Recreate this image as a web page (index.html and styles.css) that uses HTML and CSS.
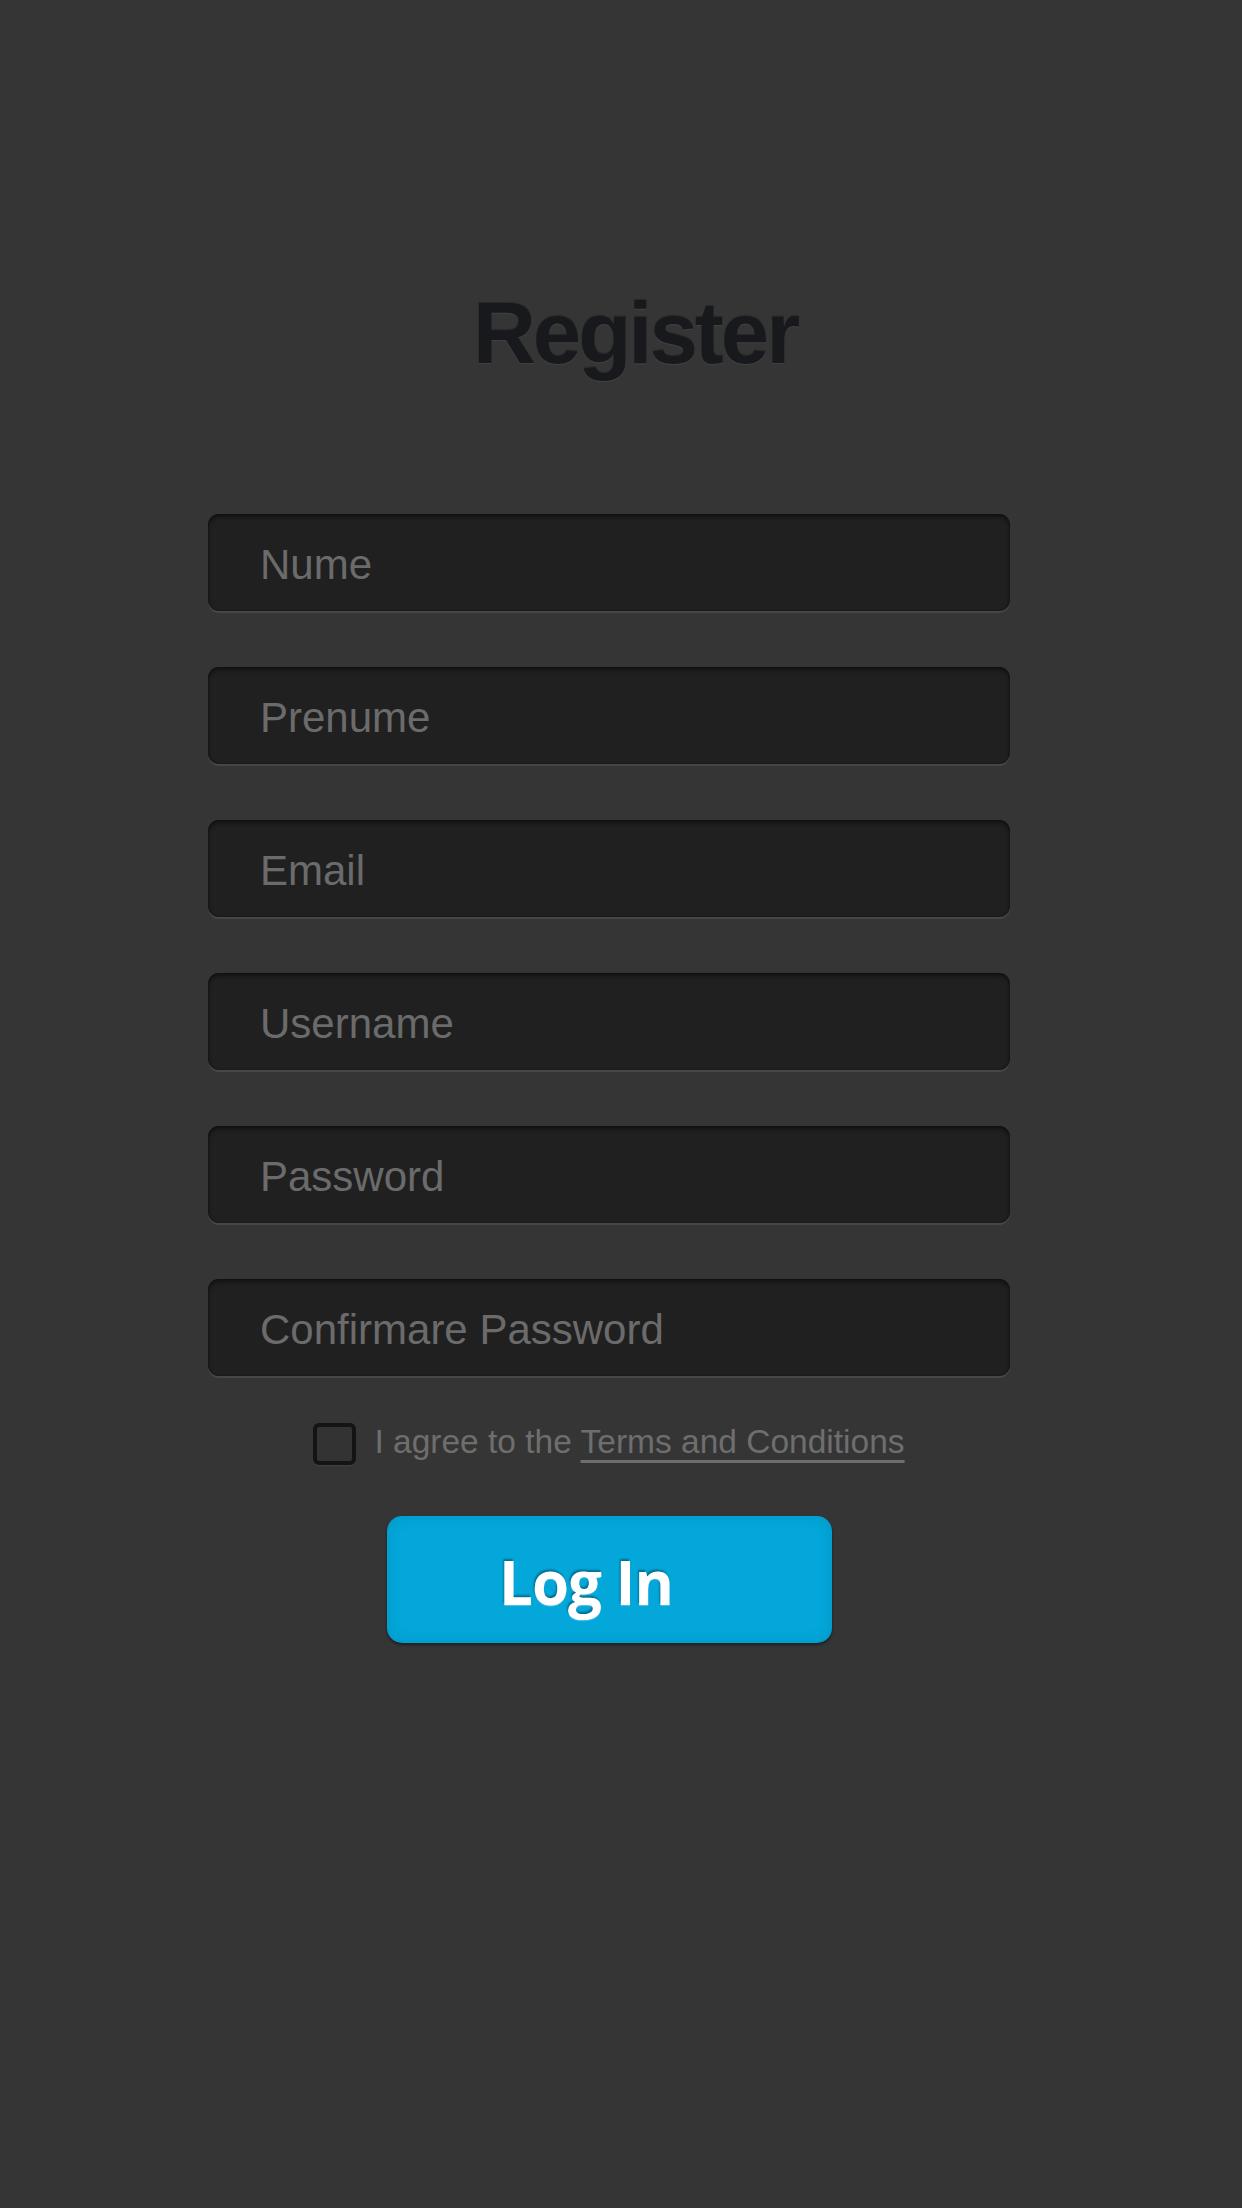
FILE: index.html
```html
<!DOCTYPE html>
<html lang="en">
<head>
<meta charset="utf-8">
<title>Register</title>
<link rel="stylesheet" href="styles.css">
</head>
<body>
<main class="page">
  <h1 class="title">Register</h1>
  <form class="form">
    <div class="field">Nume</div>
    <div class="field">Prenume</div>
    <div class="field">Email</div>
    <div class="field">Username</div>
    <div class="field">Password</div>
    <div class="field">Confirmare Password</div>
    <label class="agree">
      <span class="box"></span>
      <span class="agree-text">I agree to the <span class="terms">Terms and Conditions</span></span>
    </label>
    <div class="btn"><span class="btn-text">Log In</span></div>
  </form>
</main>
</body>
</html>
```

FILE: styles.css
```css
html, body {
  margin: 0;
  padding: 0;
}
body {
  background: #353535;
  min-height: 2208px;
  font-family: "Liberation Sans", Arial, sans-serif;
}
.page {
  width: 802px;
  margin-left: 208px;
  padding-top: 283px;
  display: flex;
  flex-direction: column;
}
.title {
  margin: 0;
  padding-left: 52px;
  text-align: center;
  font-family: "Liberation Sans", Arial, sans-serif;
  font-weight: 700;
  font-size: 87px;
  line-height: 100px;
  letter-spacing: -3px;
  color: #18191d;
  text-shadow: 0 1px 1px rgba(255,255,255,0.07), 0 -1px 1px rgba(0,0,0,0.25);
}
.form {
  margin-top: 131px;
  display: flex;
  flex-direction: column;
  gap: 56px;
}
.field {
  height: 97px;
  box-sizing: border-box;
  padding: 4px 0 0 52px;
  display: flex;
  align-items: center;
  background: #202020;
  border-radius: 11px;
  box-shadow: inset 0 3px 4px rgba(0,0,0,0.45), inset 0 0 2px rgba(0,0,0,0.5), 0 2px 0 rgba(255,255,255,0.09);
  font-size: 42px;
  color: #6b6b6b;
}
.agree {
  margin-top: -9px;
  align-self: center;
  display: flex;
  align-items: center;
  gap: 18px;
  height: 42px;
}
.box {
  width: 43px;
  height: 42px;
  box-sizing: border-box;
  border: 4px solid #141414;
  border-radius: 6px;
  background: #333333;
  box-shadow: 0 1px 0 rgba(255,255,255,0.06);
}
.agree-text {
  font-size: 33.5px;
  color: #6e6e6e;
  margin-top: -4px;
}
.terms {
  text-decoration: underline;
  text-decoration-thickness: 3px;
  text-underline-offset: 7px;
  text-decoration-color: #6e6e6e;
}
.btn {
  margin-top: -5px;
  align-self: center;
  width: 445px;
  height: 127px;
  box-sizing: border-box;
  padding-right: 46px;
  display: flex;
  align-items: center;
  justify-content: center;
  background: #03a7d9;
  border-radius: 15px;
  box-shadow: 0 2px 3px rgba(0,0,0,0.45), inset 0 0 14px rgba(0,70,110,0.18);
}
.btn-text {
  font-family: "Open Sans", "Liberation Sans", sans-serif;
  font-weight: 700;
  font-size: 60px;
  line-height: 1;
  color: #ffffff;
  letter-spacing: -1px;
  margin-top: 4px;
  text-shadow: -1px -2px 2px rgba(0,0,0,0.35), 0 1px 1px rgba(255,255,255,0.3);
}
```
